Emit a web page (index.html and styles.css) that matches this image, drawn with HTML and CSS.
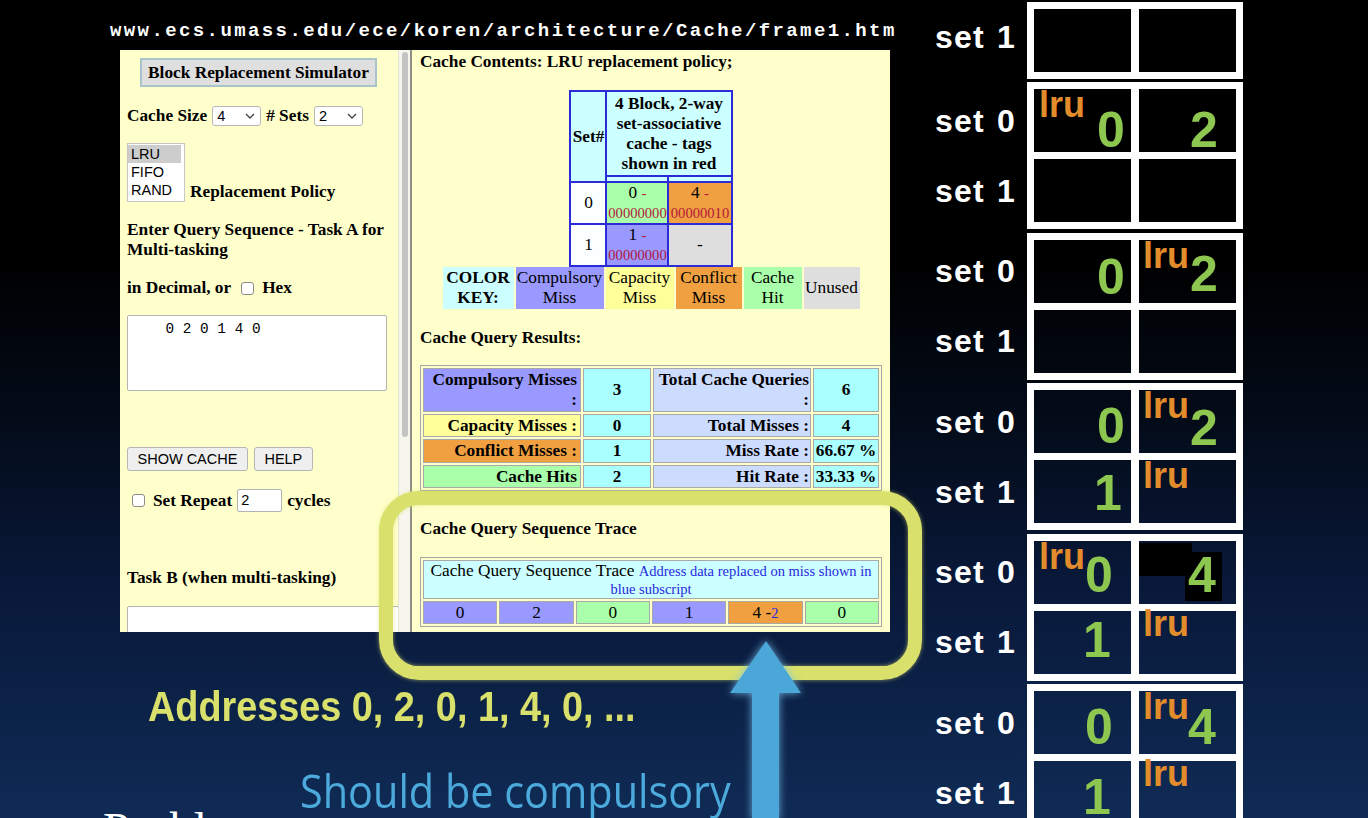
FILE: index.html
```html
<!DOCTYPE html>
<html>
<head>
<meta charset="utf-8">
<link rel="stylesheet" href="styles.css">
</head>
<body>
<div class="slide">
  <div class="url">www.ecs.umass.edu/ece/koren/architecture/Cache/frame1.htm</div>

  <div class="sim">
    <div class="lframe">
      <div class="titlebtn">Block Replacement Simulator</div>
      <div class="row sizes">
        <span>Cache Size</span>
        <span class="sel">4<svg width="10" height="6" viewBox="0 0 10 6"><path d="M1 1l4 4 4-4" fill="none" stroke="#444" stroke-width="1.3"/></svg></span>
        <span># Sets</span>
        <span class="sel">2<svg width="10" height="6" viewBox="0 0 10 6"><path d="M1 1l4 4 4-4" fill="none" stroke="#444" stroke-width="1.3"/></svg></span>
      </div>
      <div class="row policy">
        <div class="listbox">
          <div class="opt on">LRU</div>
          <div class="opt">FIFO</div>
          <div class="opt">RAND</div>
        </div>
        <span class="poltxt">Replacement Policy</span>
      </div>
      <p class="txt q">Enter Query Sequence - Task A for Multi-tasking</p>
      <div class="row dec"><span>in Decimal, or</span><span class="cb"></span><span>Hex</span></div>
      <div class="ta">    0 2 0 1 4 0</div>
      <div class="row btns"><span class="btn">SHOW CACHE</span><span class="btn">HELP</span></div>
      <div class="row rep"><span class="cb rcb"></span><span>Set Repeat</span><span class="inp">2</span><span>cycles</span></div>
      <p class="txt taskb">Task B (when multi-tasking)</p>
      <div class="ta tb"></div>
    </div>
    <div class="scroll"><div class="thumb"></div></div>
    <div class="rframe">
      <p class="h">Cache Contents: LRU replacement policy;</p>
      <table class="ctab">
        <colgroup><col class="c1"><col class="c2"><col class="c3"></colgroup>
        <tr class="hr"><th rowspan="2" class="cy setno">Set#</th><th colspan="2" class="cy hdr">4 Block, 2-way set-associative cache - tags shown in red</th></tr>
        <tr class="thin"><td class="cy"></td><td class="cy"></td></tr>
        <tr class="r0"><td class="sn">0</td><td class="hit">0 <span class="tg">-</span><br><span class="tg">00000000</span></td><td class="conf">4 <span class="tg">-</span><br><span class="tg">00000010</span></td></tr>
        <tr class="r1"><td class="sn">1</td><td class="comp">1 <span class="tg">-</span><br><span class="tg">00000000</span></td><td class="unused">-</td></tr>
      </table>
      <table class="key">
        <tr>
          <th class="cy k1">COLOR KEY:</th>
          <td class="comp k2">Compulsory Miss</td>
          <td class="cap k3">Capacity Miss</td>
          <td class="conf k4">Conflict Miss</td>
          <td class="hit k5">Cache Hit</td>
          <td class="unused k6">Unused</td>
        </tr>
      </table>
      <p class="h h2">Cache Query Results:</p>
      <table class="res">
        <colgroup><col class="w1"><col class="w2"><col class="w3"><col class="w4"></colgroup>
        <tr class="rr1"><th class="comp l1">Compulsory Misses :</th><td class="val">3</td><th class="lav">Total Cache Queries :</th><td class="val">6</td></tr>
        <tr class="rr2"><th class="cap l1">Capacity Misses :</th><td class="val">0</td><th class="lav">Total Misses :</th><td class="val">4</td></tr>
        <tr class="rr3"><th class="conf l1">Conflict Misses :</th><td class="val">1</td><th class="lav">Miss Rate :</th><td class="val">66.67 %</td></tr>
        <tr class="rr2"><th class="hit l1">Cache Hits</th><td class="val">2</td><th class="lav">Hit Rate :</th><td class="val">33.33 %</td></tr>
      </table>
      <p class="h h3">Cache Query Sequence Trace</p>
      <table class="trace">
        <tr class="tr1"><td colspan="6" class="cy thd">Cache Query Sequence Trace <span class="blue">Address data replaced on miss shown in blue subscript</span></td></tr>
        <tr class="tr2"><td class="comp">0</td><td class="comp">2</td><td class="hit">0</td><td class="comp">1</td><td class="conf">4 -<span class="blue">2</span></td><td class="hit">0</td></tr>
      </table>
    </div>
  </div>

  <div class="hl"></div>

  <svg class="arrow" width="110" height="190" viewBox="0 0 110 190"><polygon points="55,11 90,63 68,63 68,190 41,190 41,63 19,63" fill="#4ba7d7"/></svg>

  <div class="addr">Addresses 0, 2, 0, 1, 4, 0, ...</div>
  <div class="should">Should be compulsory</div>
  <div class="prob">Problem</div>

  <div class="sets">
    <div class="group partial">
      <div class="labels"><div class="lab">set 1</div></div>
      <div class="box"><div class="cell"></div><div class="cell"></div></div>
    </div>
    <div class="group">
      <div class="labels"><div class="lab">set 0</div><div class="lab">set 1</div></div>
      <div class="box">
        <div class="cell"><span class="lru">lru</span><span class="d d0a dt16">0</span></div>
        <div class="cell"><span class="d d2 dt16">2</span></div>
        <div class="cell"></div><div class="cell"></div>
      </div>
    </div>
    <div class="group">
      <div class="labels"><div class="lab">set 0</div><div class="lab">set 1</div></div>
      <div class="box">
        <div class="cell"><span class="d d0a dt12">0</span></div>
        <div class="cell"><span class="lru lr">lru</span><span class="d d2 dt9">2</span></div>
        <div class="cell"></div><div class="cell"></div>
      </div>
    </div>
    <div class="group">
      <div class="labels"><div class="lab">set 0</div><div class="lab">set 1</div></div>
      <div class="box">
        <div class="cell"><span class="d d0a dt11">0</span></div>
        <div class="cell"><span class="lru lr">lru</span><span class="d d2 dt13">2</span></div>
        <div class="cell"><span class="d d1a dt8">1</span></div>
        <div class="cell"><span class="lru lr">lru</span></div>
      </div>
    </div>
    <div class="group">
      <div class="labels"><div class="lab">set 0</div><div class="lab">set 1</div></div>
      <div class="box">
        <div class="cell"><span class="lru">lru</span><span class="d d0b dt9">0</span></div>
        <div class="cell"><span class="patch p1"></span><span class="patch p2"></span><span class="d d4 dt9">4</span></div>
        <div class="cell"><span class="d d1b dt4">1</span></div>
        <div class="cell"><span class="lru lr lup">lru</span></div>
      </div>
    </div>
    <div class="group">
      <div class="labels"><div class="lab">set 0</div><div class="lab">set 1</div></div>
      <div class="box">
        <div class="cell"><span class="d d0b dt11">0</span></div>
        <div class="cell"><span class="lru lr">lru</span><span class="d d4 dt11">4</span></div>
        <div class="cell"><span class="d d1b dt11">1</span></div>
        <div class="cell"><span class="lru lr lup">lru</span></div>
      </div>
    </div>
  </div>
</div>
</body>
</html>
```

FILE: styles.css
```css
html, body { margin: 0; padding: 0; }
body { width: 1368px; height: 818px; overflow: hidden; background: #000; }

.slide {
  position: relative;
  width: 1368px;
  height: 818px;
  overflow: hidden;
  background: linear-gradient(180deg, #000 0%, #000 32%, #040c1a 52%, #09193a 72%, #0f2b55 100%);
}

.url {
  position: absolute;
  left: 110px;
  top: 22px;
  font: bold 19px/1 "Liberation Mono", monospace;
  letter-spacing: 2.4px;
  color: #fff;
  white-space: nowrap;
}

/* simulator screenshot */
.sim {
  position: absolute;
  left: 120px;
  top: 50px;
  width: 770px;
  height: 582px;
  display: flex;
  overflow: hidden;
  font-family: "Liberation Serif", serif;
  font-size: 17.3px;
  line-height: 20px;
  color: #000;
}
.lframe {
  width: 278px;
  flex: none;
  box-sizing: border-box;
  background: #ffffcc;
  padding: 8px 6px 0 7px;
  font-weight: bold;
}
.scroll {
  width: 12px;
  flex: none;
  position: relative;
  background: #f6f6ef;
  border-left: 1px solid #e3e3d6;
  box-sizing: border-box;
}
.thumb {
  position: absolute;
  left: 3px;
  top: 2px;
  width: 6px;
  height: 385px;
  border-radius: 3px;
  background: #c3c3c3;
}
.rframe {
  flex: 1;
  background: #ffffcc;
  border-left: 2px solid #8e8e82;
  padding: 2px 8px 0 8px;
}

.titlebtn {
  margin-left: 13px;
  width: 237px;
  height: 29px;
  box-sizing: border-box;
  border: 2px solid #aac4cc;
  background: #dfdfdf;
  display: flex;
  align-items: center;
  justify-content: center;
}
.row { display: flex; align-items: center; }
.sizes { margin-top: 19px; height: 20px; gap: 5px; }
.sel {
  width: 49px;
  height: 20px;
  box-sizing: border-box;
  border: 1px solid #b7b7b7;
  border-radius: 3px;
  background: #fff;
  font: normal 14.5px/18px "Liberation Sans", sans-serif;
  display: flex;
  align-items: center;
  justify-content: space-between;
  padding: 0 5px 0 4px;
}
.policy { margin-top: 17px; align-items: flex-end; gap: 5px; }
.listbox {
  width: 58px;
  height: 59px;
  box-sizing: border-box;
  border: 1px solid #c6c6c6;
  background: #fff;
  padding: 1px 3px 0 0;
  font: normal 14.5px/18px "Liberation Sans", sans-serif;
}
.opt { padding-left: 3px; height: 18px; }
.opt.on { background: #cdcdcd; }
.txt { margin: 0; }
.q { margin-top: 18px; }
.dec { margin-top: 18px; height: 20px; }
.cb {
  width: 13px;
  height: 13px;
  box-sizing: border-box;
  border: 1px solid #8c8c8c;
  border-radius: 3px;
  background: #fff;
  margin: 0 8px 0 10px;
}
.ta {
  margin-top: 17px;
  width: 260px;
  height: 76px;
  box-sizing: border-box;
  border: 1px solid #b3b3b3;
  border-radius: 2px;
  background: #fff;
  padding: 5px 3px;
  font: normal 14.4px/16px "Liberation Mono", monospace;
  white-space: pre;
}
.btns { margin-top: 56px; gap: 6px; }
.btn {
  height: 24px;
  box-sizing: border-box;
  border: 1px solid #b6b6b6;
  border-radius: 3px;
  background: #efefef;
  padding: 0 9.5px;
  display: flex;
  align-items: center;
  font: normal 14.5px/1 "Liberation Sans", sans-serif;
}
.rep { margin-top: 18px; height: 23px; }
.rcb { margin: 0 8px 0 5px; }
.inp {
  width: 45px;
  height: 23px;
  box-sizing: border-box;
  border: 1px solid #b3b3b3;
  border-radius: 2px;
  background: #fff;
  margin: 0 5px;
  padding-left: 3px;
  display: flex;
  align-items: center;
  font: normal 14.5px/1 "Liberation Sans", sans-serif;
}
.taskb { margin-top: 56px; }
.tb { margin-top: 18px; width: 272px; height: 60px; }

/* right frame */
.h { margin: 0; font-weight: bold; }
.h2 { margin-top: 19px; }
.h3 { margin-top: 28px; }

.cy { background: #ccffff; }
.comp { background: #9999ff; }
.cap { background: #ffff99; }
.conf { background: #f0a040; }
.hit { background: #aaffaa; }
.unused { background: #dedede; }
.val { background: #aaffff; }
.lav { background: #ccdcff; }

.ctab {
  margin: 18px auto 0;
  width: 161px;
  table-layout: fixed;
  border-collapse: collapse;
  border: 2px solid #2b2bd8;
}
.ctab td, .ctab th {
  border: 2px solid #2b2bd8;
  padding: 0;
  text-align: center;
  vertical-align: middle;
}
.ctab td { font-weight: normal; }
.ctab .c1 { width: 36px; }
.ctab .c2 { width: 62px; }
.ctab .c3 { width: 63px; }
.ctab .hr { height: 85px; }
.ctab .thin { height: 6px; }
.ctab .r0 { height: 41px; }
.ctab .r1 { height: 41px; }
.ctab .sn { background: #fbffff; }
.ctab .hit, .ctab .conf, .ctab .comp { line-height: 19px; }
.tg { color: #b4143c; font-size: 14.6px; }

.key {
  margin: 0 auto;
  border-collapse: separate;
  border-spacing: 2px 0;
}
.key td, .key th {
  height: 42px;
  padding: 0;
  text-align: center;
  vertical-align: middle;
  line-height: 20px;
}
.key td { font-weight: normal; }
.k1 { width: 71px; }
.k2 { width: 88px; }
.k3 { width: 68px; }
.k4 { width: 66px; }
.k5 { width: 58px; }
.k6 { width: 56px; }

.res, .trace {
  width: 462px;
  table-layout: fixed;
  border-collapse: separate;
  border-spacing: 2px;
  border: 1px solid #a6a6a6;
}
.res { margin-top: 17px; }
.res td, .res th, .trace td {
  border: 1px solid #a9a9a9;
  padding: 0 1px;
  vertical-align: middle;
}
.res th { text-align: right; }
.res th.l1 { padding: 0 3px 0 1px; }
.res td { text-align: center; font-weight: bold; }
.res .w1 { width: 158px; }
.res .w2 { width: 68px; }
.res .w3 { width: 158px; }
.res .w4 { width: 66px; }
.res .rr1 { height: 44px; }
.res .rr2 { height: 23px; }
.res .rr3 { height: 24px; }

.trace { margin-top: 18px; }
.trace td { text-align: center; }
.trace .tr1 { height: 39px; }
.trace .tr2 { height: 23px; }
.thd { line-height: 18px; }
.blue { color: #2727e0; font-size: 14.5px; }

/* overlays on slide */
.hl {
  position: absolute;
  left: 379px;
  top: 491px;
  width: 543px;
  height: 189px;
  box-sizing: border-box;
  border: 14px solid #d9e06b;
  border-radius: 40px;
  box-shadow: 0 0 4px rgba(217, 224, 107, 0.6), inset 0 0 4px rgba(217, 224, 107, 0.6);
}
.arrow {
  position: absolute;
  left: 711px;
  top: 630px;
  filter: drop-shadow(0 0 4px rgba(120, 195, 240, 0.85));
}
.addr {
  position: absolute;
  left: 148px;
  top: 686px;
  font: bold 42px/1 "Liberation Sans", sans-serif;
  color: #d9e06b;
  white-space: nowrap;
  transform: scaleX(0.9);
  transform-origin: 0 0;
}
.should {
  position: absolute;
  left: 300px;
  top: 767px;
  font: 46px/1 "Open Sans", sans-serif;
  color: #4ca9dc;
  white-space: nowrap;
  transform: scaleX(0.9);
  transform-origin: 0 0;
}
.prob {
  position: absolute;
  left: 103px;
  top: 806px;
  font: 48px/1 "Liberation Serif", serif;
  color: #fff;
}

/* cache sets diagram */
.sets {
  position: absolute;
  left: 925px;
  top: 1.5px;
  display: flex;
  flex-direction: column;
  gap: 3.5px;
}
.group { display: flex; }
.labels {
  width: 102px;
  box-sizing: border-box;
  padding: 7px 0 0 10px;
  display: flex;
  flex-direction: column;
  gap: 7px;
}
.lab {
  height: 63px;
  display: flex;
  align-items: center;
  font: bold 32px/1 "Liberation Sans", sans-serif;
  color: #fff;
  letter-spacing: 1.2px;
  word-spacing: 2px;
}
.group.partial .lab { margin-top: -3px; }
.box {
  border: 7px solid #fff;
  display: grid;
  grid-template-columns: 97px 97px;
  grid-template-rows: 63px 63px;
  column-gap: 8px;
  row-gap: 7px;
}
.group.partial .box { grid-template-rows: 63px; }
.cell { position: relative; box-shadow: 0 0 0 4px #fff; }
.lru {
  position: absolute;
  left: 5px;
  top: -2px;
  font: bold 36px/1 "Liberation Sans", sans-serif;
  color: #e38c2b;
}
.lru.lr { left: 4px; }
.lru.lup { top: -5px; }
.d {
  position: absolute;
  font: bold 50px/1 "Liberation Sans", sans-serif;
  color: #8dc74f;
}
.d0a { left: 63px; }
.d0b { left: 51px; }
.d1a { left: 60px; }
.d1b { left: 49px; }
.d2 { left: 51px; }
.d4 { left: 49px; }
.dt4 { top: 4px; }
.dt8 { top: 8px; }
.dt9 { top: 9px; }
.dt11 { top: 11px; }
.dt12 { top: 12px; }
.dt13 { top: 13px; }
.dt16 { top: 16px; }
.patch { position: absolute; background: #000; }
.p1 { left: 0; top: 2px; width: 53px; height: 33px; }
.p2 { left: 46px; top: 11px; width: 37px; height: 49px; }
```
